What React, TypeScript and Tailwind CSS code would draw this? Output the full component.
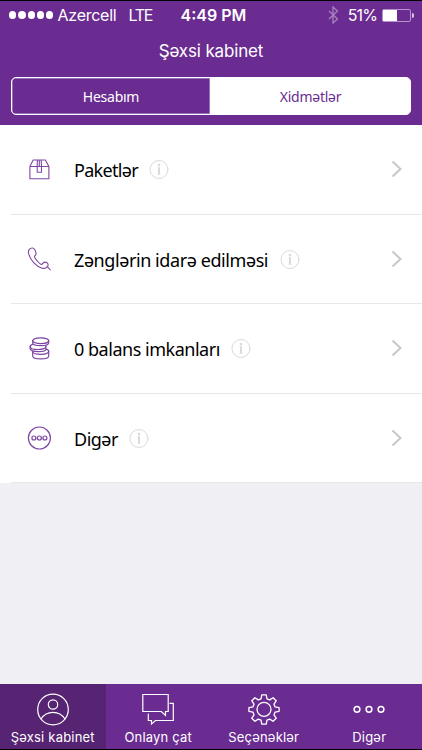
import type { ReactNode } from "react";

const Stroke = ({ size, width = 1, className, children }: { size: number; width?: number; className?: string; children: ReactNode }) => (
  <svg
    width={size}
    height={size}
    viewBox={`0 0 ${size} ${size}`}
    fill="none"
    stroke="currentColor"
    strokeWidth={width}
    strokeLinecap="round"
    strokeLinejoin="round"
    className={className}
  >
    {children}
  </svg>
);

const BoxIcon = () => (
  <Stroke size={24} width={1.1}>
    <path d="M2.900 9.500h19v12.200h-19zM2.900 9.500 6.200 3h12.200L21.900 9.500M10.400 3 10.200 9.500v5.800h4.300V9.500l-.3-6.500M12.300 3v6.500" />
  </Stroke>
);

const PhoneIcon = () => (
  <Stroke size={24} width={1.1}>
    <path d="M5.500 1C2.800.8 1 3 1.500 6c1.300 6.500 7.300 13.500 13.700 15.200 3 .7 5.600-.7 5.900-3.100.1-1-.3-1.600-1-2.200-1.300-1-2.900-1-3.900.1l-1 1c-.6.6-1.300.4-2-.1-2.300-1.700-4.200-3.900-5.500-6.300-.4-.8-.3-1.300.2-1.800 1-.8 1.400-1.600 1.100-2.900C8.500 3.800 7.800 1.200 5.500 1zM20.600 19.800l2.700 3.200" />
  </Stroke>
);

const CoinsIcon = () => (
  <Stroke size={24} width={1.200}>
    <ellipse cx="13.700" cy="4.700" rx="8" ry="2.900" />
    <path d="M5.700 4.700v2.100c0 1.700 3.600 2.900 8 2.900s8-1.200 8-2.900V4.700" />
    <path d="M5.700 8.300C4 8.800 3.100 9.500 3.100 10.400c0 1.800 3.800 3.100 8.400 3.100 4 0 7.400-1.300 7.400-2.700V9.500" />
    <path d="M3.100 10.400v2.200c0 1.700 3.800 3 8.400 3 4.100 0 7.400-1.200 7.400-2.700v-2" />
    <path d="M18.900 13.200c1.800.4 2.800 1.200 2.800 2.100 0 1.700-3.600 3-8 3s-8-1-8-2.800" />
    <path d="M5.700 15.500v4.400c0 1.700 3.600 2.900 8 2.900s8-1.200 8-2.900v-4.600" />
  </Stroke>
);

const OtherIcon = () => (
  <Stroke size={24} width={1.200}>
    <circle cx="12.400" cy="12" r="11" />
    <circle cx="6.900" cy="12" r="2" />
    <circle cx="12.400" cy="12" r="2" />
    <circle cx="17.900" cy="12" r="2" />
  </Stroke>
);

const InfoIcon = () => (
  <Stroke size={20} className="text-[#dadada]">
    <circle cx="10" cy="10.500" r="9" />
    <path d="M10 8.300v7.200" strokeWidth="2" strokeLinecap="butt" />
    <path d="M8.500 8.700H10M8.500 15.200h3" strokeWidth=".7" strokeLinecap="butt" />
    <circle cx="10" cy="6.100" r="1.300" fill="currentColor" stroke="none" />
  </Stroke>
);

const Chevron = () => (
  <svg width="12" height="18" viewBox="0 0 12 18" fill="none" stroke="#c7c7cc" strokeWidth="2">
    <path d="M1.500 1.500 9.500 9l-8 7.500" />
  </svg>
);

const ProfileIcon = () => (
  <Stroke size={34} width={1.200}>
    <circle cx="17" cy="17.500" r="15.300" />
    <circle cx="17" cy="12.500" r="4.700" />
    <path d="M5 27C8 22.300 12.200 20.300 17 20.300s9 2 12 6.700" />
  </Stroke>
);

const ChatIcon = () => (
  <Stroke size={34} width={1.200}>
    <path d="M1.800 2.500h25.400v17h-2.700v3.900l-4.200-3.900H1.800z" strokeLinejoin="miter" />
    <path d="M29 11.300h3.300V28.500H14.500L10.500 32v-3.500H7.300v-6.300" strokeLinejoin="miter" />
  </Stroke>
);

const GearIcon = () => (
  <Stroke size={34} width={1.300}>
    <circle cx="17" cy="17.300" r="7" />
    <path d="M14.800 2.800h4.400l.8 4 2.700 1.100 3.400-2.200 3.100 3.100-2.200 3.400 1.100 2.700 4 .8v3.600l-4 .8-1.100 2.700 2.200 3.400-3.100 3.100-3.400-2.200-2.700 1.100-.8 4h-4.400l-.8-4-2.700-1.100-3.400 2.200-3.100-3.100 2.200-3.400-1.100-2.700-4-.8v-3.600l4-.8L7 12.200 4.800 8.800l3.100-3.100 3.400 2.200L14 6.800z" />
  </Stroke>
);

const DotsIcon = () => (
  <Stroke size={34} width={1.500}>
    <circle cx="5" cy="17.300" r="2.900" />
    <circle cx="17" cy="17.300" r="2.900" />
    <circle cx="29" cy="17.300" r="2.900" />
  </Stroke>
);

const services = [
  { label: "Paketlər", icon: <BoxIcon />, tracking: "tracking-[-0.700px]" },
  { label: "Zənglərin idarə edilməsi", icon: <PhoneIcon />, tracking: "tracking-[-0.420px]" },
  { label: "0 balans imkanları", icon: <CoinsIcon />, tracking: "tracking-[-0.480px]" },
  { label: "Digər", icon: <OtherIcon />, tracking: "tracking-[-0.500px]" },
];

const tabs = [
  { label: "Şəxsi kabinet", icon: <ProfileIcon />, active: true },
  { label: "Onlayn çat", icon: <ChatIcon /> },
  { label: "Seçənəklər", icon: <GearIcon /> },
  { label: "Digər", icon: <DotsIcon /> },
];

function StatusBar() {
  return (
    <div className="grid h-7 grid-cols-[1fr_66px_1fr] items-center pl-[9px] pr-[8px] text-[16px]">
      <div className="flex items-center">
        <div className="flex gap-[2px]">
          {[0, 1, 2, 3, 4].map((n) => (
            <span key={n} className="h-[7.300px] w-[7.300px] rounded-full bg-white" />
          ))}
        </div>
        <span className="ml-[4px] tracking-[-0.250px]">Azercell</span>
        <span className="ml-[12px] tracking-[-1.300px]">LTE</span>
      </div>
      <span className="whitespace-nowrap pl-[2px] text-center font-semibold">4:49 PM</span>
      <div className="flex items-center justify-end">
        <svg width="11" height="18" viewBox="0 0 11 18" fill="none" stroke="#a682c0" strokeWidth="1.300" className="mr-[9px]">
          <path d="M1 5l8.500 8-4.500 4V1l4.500 4L1 13" />
        </svg>
        <span className="tracking-[-0.900px]">51%</span>
        <span className="ml-[5px] flex h-[13px] w-[29px] rounded-[2px] border border-[#b594cb]">
          <span className="w-[14px] bg-white" />
        </span>
        <span className="ml-px h-[5px] w-[2px] rounded-r-full bg-[#d9c8e5]" />
      </div>
    </div>
  );
}

export default function App() {
  return (
    <div className="flex h-[750px] w-[422px] flex-col border-y border-black bg-[#efeff4] font-['Inter','Noto_Sans',sans-serif]">
      <header className="h-[124px] bg-[#6b2c91] text-white">
        <StatusBar />
        <h1 className="mt-[10px] text-center text-[17px] leading-6 tracking-[-0.150px]">Şəxsi kabinet</h1>
        <div className="mx-[11px] mt-[14px] flex h-[38px] overflow-hidden rounded-[5px] border border-white bg-white font-['Noto_Sans',sans-serif] text-[14px] tracking-[-0.250px]">
          <button className="w-[198px] rounded-l-[4px] bg-[#6b2c91] pt-px shadow-[inset_0_0_0_0.5px_#cbb2da]">Hesabım</button>
          <button className="flex-1 bg-white pt-px pl-px text-[#6b2c91]">Xidmətlər</button>
        </div>
      </header>

      <ul className="bg-white font-['Noto_Sans',sans-serif]">
        {services.map((item) => (
          <li key={item.label} className="ml-[11px] flex h-[89.500px] items-center border-b border-[#e8e8ea] pl-[16px] pr-[19px] text-black">
            <span className="text-[#7d46a3]">{item.icon}</span>
            <span className={`ml-[23px] mr-[11.500px] pt-[3px] text-[18px] ${item.tracking}`}>{item.label}</span>
            <InfoIcon />
            <span className="ml-auto">
              <Chevron />
            </span>
          </li>
        ))}
      </ul>

      <nav className="mt-auto grid h-[65px] grid-cols-4 bg-[#6b2c91] text-white">
        {tabs.map((tab) => (
          <button key={tab.label} className={`flex flex-col items-center pt-[8px] ${tab.active ? "bg-[#572473]" : ""}`}>
            {tab.icon}
            <span className="mt-[2px] whitespace-nowrap text-[13px] leading-[18px] tracking-[0.200px]">{tab.label}</span>
          </button>
        ))}
      </nav>
    </div>
  );
}
